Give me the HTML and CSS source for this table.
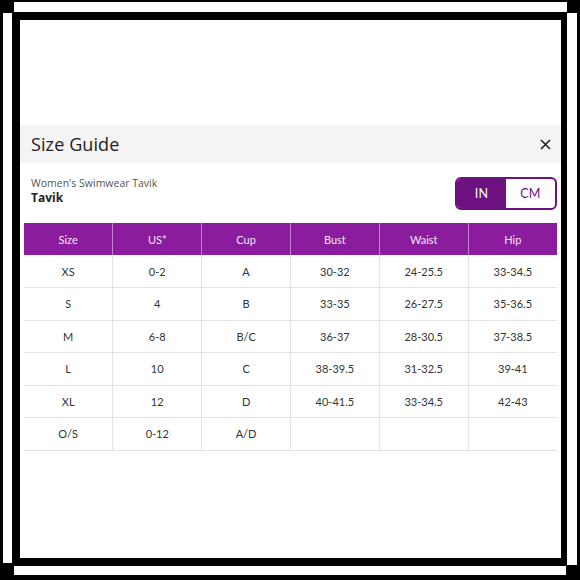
FILE: index.html
```html
<!DOCTYPE html>
<html>
<head>
<meta charset="utf-8">
<link rel="stylesheet" href="styles.css">
</head>
<body>
<div class="frame">
  <div class="page">
    <div class="modal-head">
      <h1 class="title">Size Guide</h1>
      <svg class="close" width="11" height="11" viewBox="0 0 11 11"><path d="M1 1 L10 10 M10 1 L1 10" stroke="#222" stroke-width="1.6" fill="none"/></svg>
    </div>
    <div class="info">
      <div class="product">
        <div class="cat">Women's Swimwear Tavik</div>
        <div class="name">Tavik</div>
      </div>
      <div class="toggle">
        <span class="opt active">IN</span>
        <span class="opt">CM</span>
      </div>
    </div>
    <table class="sizes">
      <thead>
        <tr><th>Size</th><th>US*</th><th>Cup</th><th>Bust</th><th>Waist</th><th>Hip</th></tr>
      </thead>
      <tbody>
        <tr><td>XS</td><td>0-2</td><td>A</td><td>30-32</td><td>24-25.5</td><td>33-34.5</td></tr>
        <tr><td>S</td><td>4</td><td>B</td><td>33-35</td><td>26-27.5</td><td>35-36.5</td></tr>
        <tr><td>M</td><td>6-8</td><td>B/C</td><td>36-37</td><td>28-30.5</td><td>37-38.5</td></tr>
        <tr><td>L</td><td>10</td><td>C</td><td>38-39.5</td><td>31-32.5</td><td>39-41</td></tr>
        <tr><td>XL</td><td>12</td><td>D</td><td>40-41.5</td><td>33-34.5</td><td>42-43</td></tr>
        <tr><td>O/S</td><td>0-12</td><td>A/D</td><td></td><td></td><td></td></tr>
      </tbody>
    </table>
  </div>
</div>
</body>
</html>
```
FILE: styles.css
```css
* { box-sizing: border-box; }
html, body { margin: 0; padding: 0; background: #000; }
.frame {
  width: 580px;
  height: 580px;
  padding: 20px 19px 22px 20px;
  background:
    linear-gradient(#fff, #fff) 14px 2px / 553px 10px no-repeat,
    linear-gradient(#fff, #fff) 3px 13px / 9px 550px no-repeat,
    linear-gradient(#fff, #fff) 567px 13px / 10px 552px no-repeat,
    linear-gradient(#fff, #fff) 14px 566px / 552px 9px no-repeat,
    #000;
}
.page {
  width: 541px;
  height: 538px;
  background: #fff;
  padding-top: 105px;
  font-family: Lato, "Open Sans", sans-serif;
  color: #333;
}
.modal-head {
  height: 38px;
  background: #f4f4f4;
  display: flex;
  align-items: center;
  justify-content: space-between;
  padding: 0 10px 0 11px;
}
.title {
  margin: 0;
  font-family: "Open Sans", sans-serif;
  font-weight: 400;
  font-size: 18px;
  color: #222;
  letter-spacing: 0.1px;
}
.close { display: block; margin-top: 1px; }
.info {
  display: flex;
  justify-content: space-between;
  align-items: flex-start;
  margin-top: 14px;
  padding: 0 4px 0 11px;
}
.product { margin-top: -1px; }
.cat {
  font-family: "Open Sans", sans-serif;
  font-size: 10.5px;
  color: #555;
  line-height: 14.5px;
}
.name {
  font-family: "Open Sans", sans-serif;
  font-size: 12px;
  font-weight: 700;
  color: #222;
  line-height: 14px;
}
.toggle {
  display: flex;
  width: 102px;
  height: 33px;
  border: 2px solid #6d1180;
  border-radius: 6px;
  overflow: hidden;
}
.opt {
  flex: 1;
  display: flex;
  align-items: center;
  justify-content: center;
  font-size: 12.5px;
  color: #6d1180;
  letter-spacing: 0.3px;
}
.opt.active {
  background: #6d1180;
  color: #fff;
}
.sizes {
  margin: 13px 0 0 4px;
  width: 533px;
  border-collapse: collapse;
  table-layout: fixed;
  font-size: 11px;
}
.sizes th {
  background: #8b1c9e;
  color: #f2e6f4;
  font-weight: 400;
  height: 32px;
  border-left: 1px solid rgba(255,255,255,0.45);
  padding: 0;
}
.sizes th:first-child { border-left: none; }
.sizes td {
  height: 32.5px;
  text-align: center;
  padding: 0;
  color: #333;
  border-bottom: 1px solid #e2e2e2;
  border-left: 1px solid #e2e2e2;
}
.sizes td:first-child { border-left: none; }
```
